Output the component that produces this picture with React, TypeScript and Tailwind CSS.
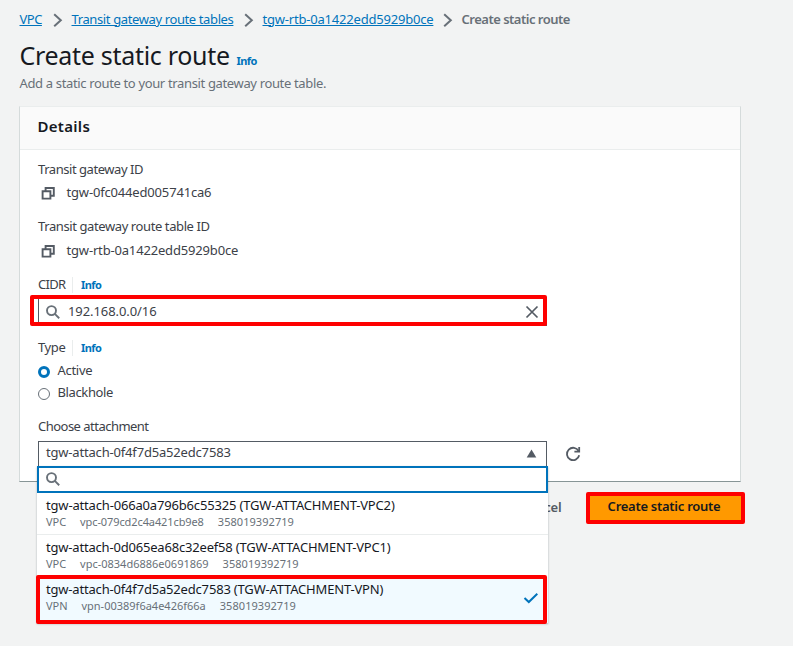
import React from "react";

function Chevron() {
  return (
    <svg className="mt-[2px] h-4 w-[10px] shrink-0" viewBox="0 0 10 16" fill="none" stroke="#687078" strokeWidth="2">
      <path d="M1.2 2.2 L7.8 8.2 L1.2 14.2" />
    </svg>
  );
}

function CopyIcon() {
  return (
    <svg className="mt-[3px] h-4 w-4 shrink-0" viewBox="0 0 16 16" fill="none" stroke="#545b64" strokeWidth="1.9">
      <path d="M1.6 5.2h7.8v7.4h-7.8z" />
      <path d="M4.6 5.2v-3.2h8.2v7.8h-3.4" />
    </svg>
  );
}

function SearchIcon() {
  return (
    <svg className="h-4 w-4 shrink-0" viewBox="0 0 16 16" fill="none" stroke="#687078" strokeWidth="1.9">
      <circle cx="5.5" cy="6.6" r="4.5" />
      <path d="M8.8 9.9 L13.2 14.2" />
    </svg>
  );
}

function Info() {
  return <a className="text-[11px] font-bold tracking-[-0.55px] text-[#0073bb]">Info</a>;
}

function CopyRow({ id }: { id: string }) {
  return (
    <div className="flex h-6 items-center">
      <span className="ml-[3px] flex">
        <CopyIcon />
      </span>
      <span className="mb-px ml-[9.5px] tracking-[-0.17px]">{id}</span>
    </div>
  );
}

const options = [
  { name: "tgw-attach-066a0a796b6c55325 (TGW-ATTACHMENT-VPC2)", type: "VPC", id: "vpc-079cd2c4a421cb9e8", row: "h-[42px] border-b border-[#eaeded]", nameCls: "tracking-[-0.17px]", idCls: "tracking-[-0.1px]" },
  { name: "tgw-attach-0d065ea68c32eef58 (TGW-ATTACHMENT-VPC1)", type: "VPC", id: "vpc-0834d6886e0691869", row: "h-[42px]", nameCls: "tracking-[-0.19px]", idCls: "tracking-[0px]" },
  { name: "tgw-attach-0f4f7d5a52edc7583 (TGW-ATTACHMENT-VPN)", type: "VPN", id: "vpn-00389f6a4e426f66a", row: "h-[46px] bg-[#f1faff]", nameCls: "tracking-[-0.18px]", idCls: "tracking-[0px]" },
];

function Dropdown() {
  return (
    <div className="absolute left-[-2px] top-[24px] z-10 w-[511px] bg-white shadow-[0_1px_2px_rgba(0,28,36,0.3)]">
      <div className="flex h-[27px] items-center border-2 border-[#0073bb] pl-[7px]">
        <span className="-mt-px flex"><SearchIcon /></span>
      </div>
      {options.map((o, i) => (
        <div key={o.name} className={"relative flex flex-col pl-[9px] " + o.row}>
          <span className={"mt-[3px] h-[17px] whitespace-nowrap leading-[18px] text-[#16191f] " + o.nameCls}>{o.name}</span>
          <span className="flex h-4 text-[11px] leading-[18px] text-[#687078]">
            <span className="mr-[14px] tracking-[-0.05px]">{o.type}</span>
            <span className={"mr-[14px] " + o.idCls}>{o.id}</span>
            <span className="tracking-[0.05px]">358019392719</span>
          </span>
          {i === 2 && (
            <svg className="absolute right-[9px] top-[13px] h-4 w-4" viewBox="0 0 16 16" fill="none" stroke="#0073bb" strokeWidth="2">
              <path d="M1.5 8 L5.8 12 L14.3 3.7" />
            </svg>
          )}
        </div>
      ))}
      <div className="absolute left-[-1px] top-[109px] h-[49px] w-[511px] rounded-[2px] border-4 border-[#fe0000]" />
    </div>
  );
}

export default function App() {
  return (
    <div className="h-[646px] w-[793px] overflow-hidden bg-[#f2f3f3] font-['Noto_Sans','Open_Sans',sans-serif] text-[13px] leading-5 text-[#3c4148]">
      <nav className="flex h-[38px] items-center whitespace-nowrap pl-[19.5px] text-[#0073bb]">
        <a className="-mt-px w-[23px] tracking-[-0.5px] underline">VPC</a>
        <span className="ml-[10px] mr-[9px]"><Chevron /></span>
        <a className="-mt-px w-[162px] tracking-[-0.38px] underline">Transit gateway route tables</a>
        <span className="ml-[10px] mr-[9px]"><Chevron /></span>
        <a className="-mt-px w-[171px] tracking-[-0.2px] underline">tgw-rtb-0a1422edd5929b0ce</a>
        <span className="ml-[9px] mr-[9px]"><Chevron /></span>
        <span className="-mt-px font-semibold tracking-[-0.5px] text-[#687078]">Create static route</span>
      </nav>
      <header className="flex h-[68px] flex-col pl-[19.5px]">
        <div className="-mt-px flex h-[36px] items-baseline whitespace-nowrap">
          <h1 className="w-[217px] text-[25px] leading-9 tracking-[-0.3px] text-[#16191f]">Create static route</h1>
          <Info />
        </div>
        <p className="tracking-[-0.35px] text-[#687078]">Add a static route to your transit gateway route table.</p>
      </header>

      <main className="ml-[19px] h-[376px] w-[722px] border border-[#d5dbdb] border-b-[#879596] border-t-[#eaeded] bg-white">
        <div className="flex h-[43px] items-center border-b border-[#eaeded] bg-[#fafafa] pl-[17.5px]">
          <h2 className="mb-[4px] text-[15px] font-semibold tracking-[0.3px] text-[#16191f]">Details</h2>
        </div>
        <div className="flex flex-col pl-[18px]">
          <div className="mt-[9px] tracking-[-0.45px]">Transit gateway ID</div>
          <div className="mt-px"><CopyRow id="tgw-0fc044ed005741ca6" /></div>
          <div className="mt-[12px] tracking-[-0.4px]">Transit gateway route table ID</div>
          <div className="mt-[2px]"><CopyRow id="tgw-rtb-0a1422edd5929b0ce" /></div>
          <div className="mt-[13px] flex h-5 items-center">
            <span className="-mt-[2px] w-[34px] tracking-[-0.7px]">CIDR</span>
            <span className="mr-2 h-4 w-px bg-[#eaeded]" />
            <Info />
          </div>
          <div className="relative mt-[3px] flex h-[28px] w-[509px] items-center border border-[#545b64] pl-[7px]">
            <SearchIcon />
            <span className="-mt-[2px] ml-[6px] tracking-[-0.08px]">192.168.0.0/16</span>
            <svg className="ml-auto mr-[7px] h-[14px] w-[14px]" viewBox="0 0 14 14" stroke="#545b64" strokeWidth="1.7">
              <path d="M1.5 1.5 L12.5 12.5 M12.5 1.5 L1.5 12.5" />
            </svg>
            <div className="absolute left-[-9px] top-[-4px] h-[31px] w-[517px] rounded-[2px] border-4 border-[#fe0000]" />
          </div>
          <div className="mt-[12px] flex h-5 items-center">
            <span className="-mt-[2px] w-[34px] tracking-[-0.4px]">Type</span>
            <span className="mr-2 h-4 w-px bg-[#eaeded]" />
            <Info />
          </div>
          <div className="mt-[2px] flex h-[22px] items-center">
            <span className="mt-[2px] h-3 w-3 rounded-full border-[3.5px] border-[#0073bb]" />
            <span className="-mt-[2px] ml-[7.5px] tracking-[-0.3px]">Active</span>
          </div>
          <div className="flex h-[22px] items-center">
            <span className="mt-px h-3 w-3 rounded-full border border-[#687078]" />
            <span className="-mt-[2px] ml-[7.5px] tracking-[-0.38px]">Blackhole</span>
          </div>
          <div className="mt-[12px] tracking-[-0.52px]">Choose attachment</div>
          <div className="mt-[5px] flex items-start">
            <div className="relative h-[28px] w-[509px] border border-[#545b64]">
              <div className="flex h-[24px] items-center pl-[7px]">
                <span className="-mt-[4px] tracking-[-0.18px]">tgw-attach-0f4f7d5a52edc7583</span>
                <svg className="-mt-px ml-auto mr-[9px] h-[9px] w-[11px]" viewBox="0 0 11 9" fill="#545b64">
                  <path d="M5.5 0.5 L10.3 8.5 H0.7 Z" />
                </svg>
              </div>
              <Dropdown />
            </div>
            <svg className="ml-[18px] mt-[5px] h-4 w-4" viewBox="0 0 16 16" fill="none" stroke="#545b64" strokeWidth="1.8">
              <path d="M13.6 5 A6.2 6.2 0 1 0 14.2 9.3" />
              <path d="M14.2 1 V5.6 H9.4" />
            </svg>
          </div>
        </div>
      </main>

      <footer className="flex h-[50px] w-[744.5px] items-center justify-end font-semibold">
        <span className="mb-px mr-[24px] tracking-[-0.2px] text-[#545b64]">Cancel</span>
        <button className="mt-px h-[32px] w-[159px] rounded-[2px] border-4 border-[#fe0000] bg-[#ff9900] pb-[3px] pr-[2px] tracking-[-0.27px] text-[#16191f]">
          Create static route
        </button>
      </footer>
    </div>
  );
}
